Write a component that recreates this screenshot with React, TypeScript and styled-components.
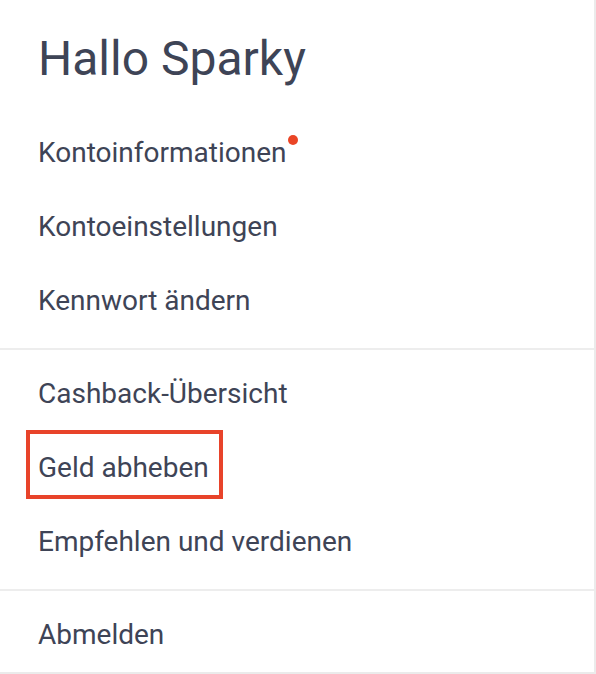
import styled, { createGlobalStyle } from "styled-components";

const GlobalStyle = createGlobalStyle`
  html, body {
    margin: 0;
    padding: 0;
    background: #ffffff;
  }
  body {
    font-family: Roboto, "Liberation Sans", Arial, sans-serif;
    -webkit-font-smoothing: antialiased;
  }
`;

const Panel = styled.nav`
  width: 596px;
  box-sizing: border-box;
  border-right: 2px solid #ebebeb;
  border-bottom: 2px solid #ebebeb;
  background: #fff;
  color: #3e4456;
`;

const Greeting = styled.h1`
  margin: 0 0 20px;
  padding: 29px 0 0 38px;
  font-size: 48px;
  line-height: 60px;
  font-weight: 400;
`;

const Section = styled.ul<{ $last?: boolean }>`
  list-style: none;
  margin: 0;
  padding: 7px 0 ${(p) => (p.$last ? "0" : "10px")} 38px;
  border-bottom: ${(p) => (p.$last ? "none" : "2px solid #ededed")};
`;

const Item = styled.li`
  padding: 19px 0;
  font-size: 28px;
  line-height: 36px;
`;

const Label = styled.span<{ $dot?: boolean; $marked?: boolean }>`
  position: relative;
  display: inline-block;

  ${(p) =>
    p.$dot &&
    `
    &::after {
      content: "";
      position: absolute;
      right: -12px;
      top: 0;
      width: 10px;
      height: 10px;
      border-radius: 50%;
      background: #ea4526;
    }
  `}

  ${(p) =>
    p.$marked &&
    `
    &::before {
      content: "";
      position: absolute;
      left: -12px;
      right: -14px;
      top: -20px;
      bottom: -13px;
      border: 4px solid #e8432a;
    }
  `}
`;

export default function App() {
  return (
    <>
      <GlobalStyle />
      <Panel>
        <Greeting>Hallo Sparky</Greeting>
        <Section>
          <Item>
            <Label $dot>Kontoinformationen</Label>
          </Item>
          <Item>
            <Label>Kontoeinstellungen</Label>
          </Item>
          <Item>
            <Label>Kennwort ändern</Label>
          </Item>
        </Section>
        <Section>
          <Item>
            <Label>Cashback-Übersicht</Label>
          </Item>
          <Item>
            <Label $marked>Geld abheben</Label>
          </Item>
          <Item>
            <Label>Empfehlen und verdienen</Label>
          </Item>
        </Section>
        <Section $last>
          <Item>
            <Label>Abmelden</Label>
          </Item>
        </Section>
      </Panel>
    </>
  );
}
